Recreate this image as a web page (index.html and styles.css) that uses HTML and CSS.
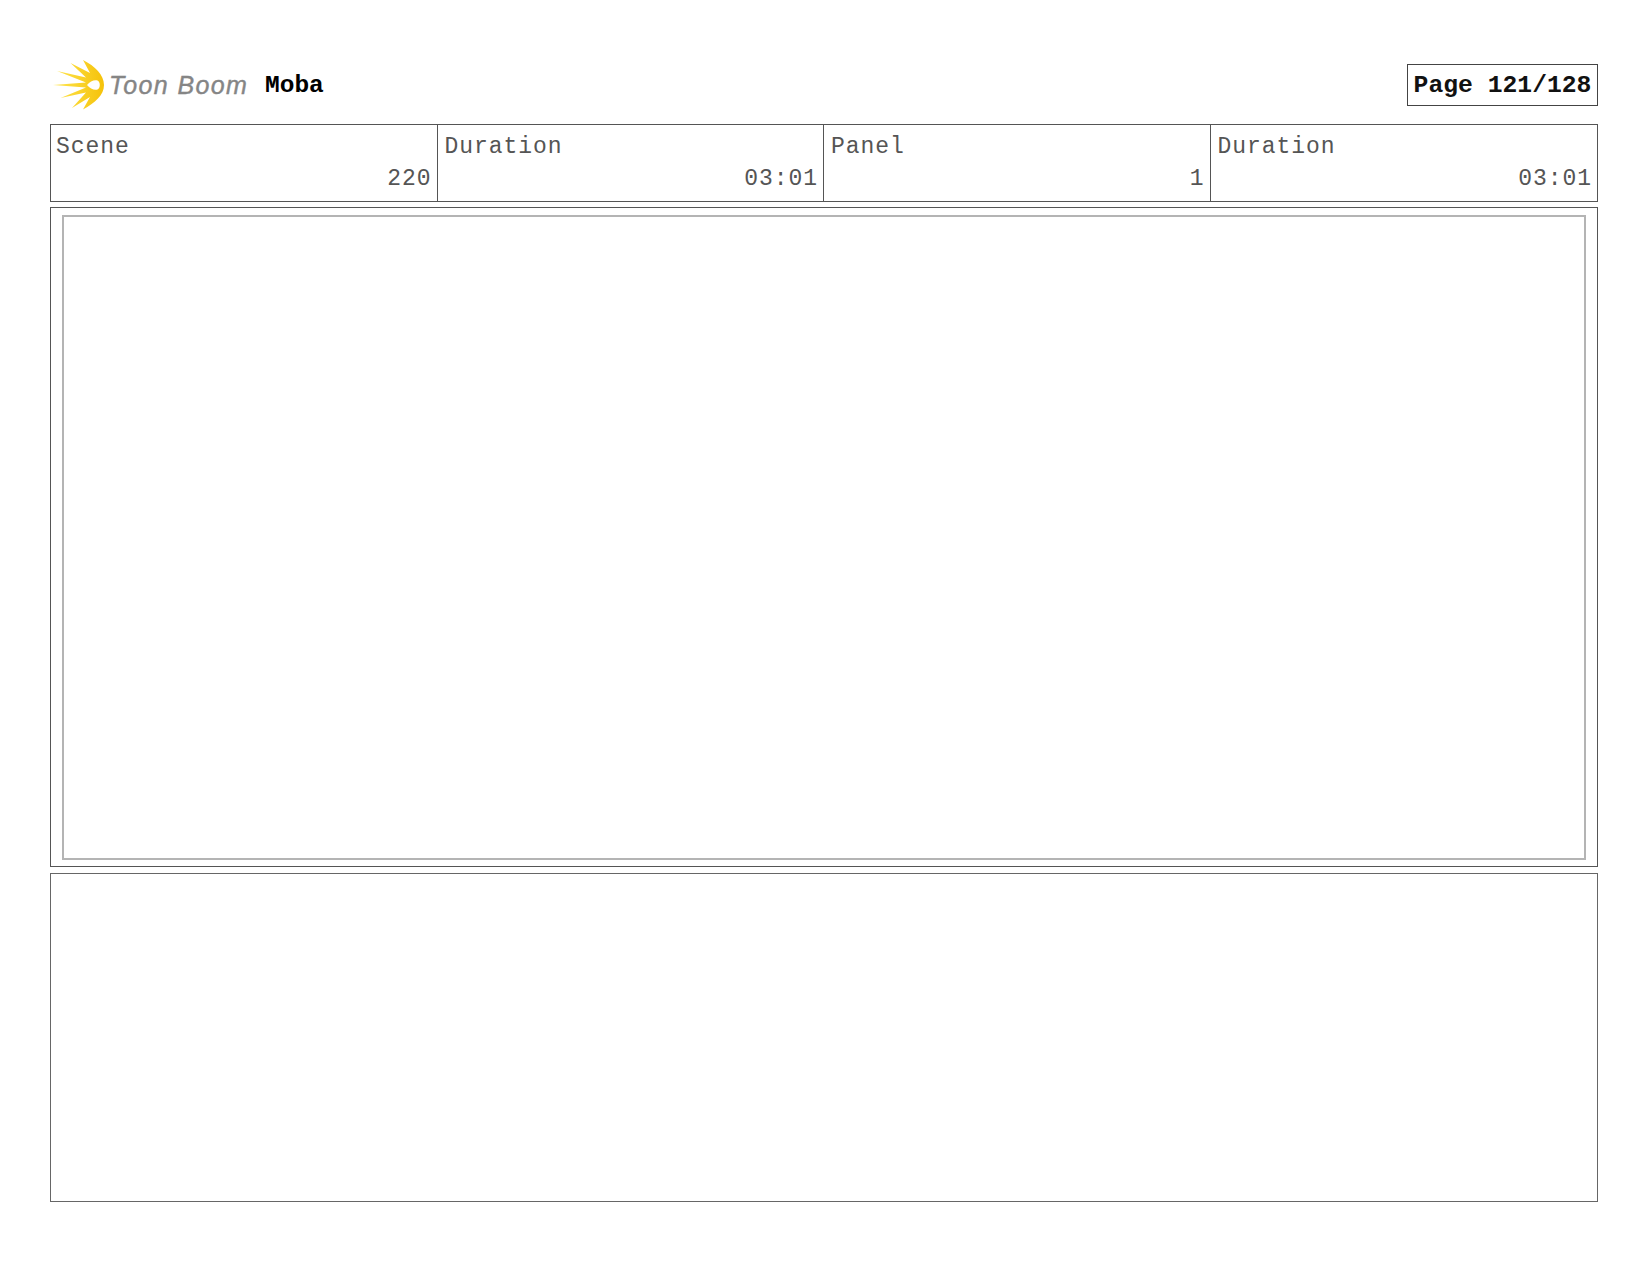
FILE: index.html
```html
<!DOCTYPE html>
<html lang="en">
<head>
<meta charset="utf-8">
<title>Moba storyboard page 121</title>
<link rel="stylesheet" href="styles.css">
</head>
<body>
<main class="page">
  <header class="top">
    <div class="brand">
      <svg class="burst" viewBox="0 0 54 54" aria-hidden="true">
        <defs>
          <linearGradient id="sun" x1="0" x2="1" y1="0" y2="0">
            <stop offset="0" stop-color="#ffe650"/>
            <stop offset="1" stop-color="#f5c20a"/>
          </linearGradient>
        </defs>
        <path fill="url(#sun)" d="M2 27 L35 24.500 L6 13 L35 19.500 L19.500 5 L39 15 L32 2 C44 8 53 17 53 27 C53 37 44 45 32 51.500 L39 39 L21 50 L35 34.500 L9.500 40 L35 29.500 Z"/>
        <path fill="#fff" d="M36 27 C39 23.500 43 21.500 46.500 22.500 C49.500 24 49.500 30 46.500 31.500 C43 32.500 39 30.500 36 27 Z"/>
      </svg>
      <span class="wordmark">Toon Boom</span>
      <span class="project">Moba</span>
    </div>
    <div class="pageno">Page 121/128</div>
  </header>

  <section class="meta">
    <div class="cell"><div>Scene</div><div class="val">220</div></div>
    <div class="cell"><div>Duration</div><div class="val">03:01</div></div>
    <div class="cell"><div>Panel</div><div class="val">1</div></div>
    <div class="cell"><div>Duration</div><div class="val">03:01</div></div>
  </section>

  <section class="panel"><div class="frame"></div></section>
  <section class="notes"></section>
</main>
</body>
</html>
```
FILE: styles.css
```css
* { box-sizing: border-box; }
html, body { margin: 0; background: #fff; }
body { font-family: "Liberation Mono", "Courier New", monospace; color: #222; }
.page { display: flex; flex-direction: column; width: 1650px; height: 1275px; padding: 64px 52px 0 50px; }

.top { display: flex; justify-content: space-between; align-items: center; height: 42px; margin-bottom: 18px; }
.brand { display: flex; align-items: center; height: 42px; }
.burst { width: 54px; height: 54px; margin-left: 1px; flex: none; }
.wordmark { margin-left: 4px; width: 156px; font-family: "Liberation Sans", sans-serif; font-style: italic; font-size: 25px; letter-spacing: 1.35px; color: #858585; -webkit-text-stroke: 0.4px #858585; }
.project { font-weight: 700; font-size: 24.5px; color: #000; }
.pageno { height: 42px; width: 191px; border: 1px solid #444; display: flex; align-items: center; justify-content: center; font-weight: 700; font-size: 24.7px; color: #111; }

.meta { display: grid; grid-template-columns: repeat(4, 1fr); height: 78px; border: 1px solid #555; margin-bottom: 5px; }
.cell { padding: 7px 5px 0 5px; font-size: 23px; letter-spacing: 0.95px; line-height: 30px; color: #555; border-right: 1px solid #555; }
.cell + .cell { padding-left: 7px; }
.cell:last-child { border-right: 0; }
.val { text-align: right; margin-top: 2px; }

.panel { height: 660px; border: 1px solid #555; padding: 7px 11px 6px 11px; margin-bottom: 6px; }
.frame { height: 100%; border: 2px solid #b4b4b4; }
.notes { height: 329px; border: 1px solid #666; }
```
